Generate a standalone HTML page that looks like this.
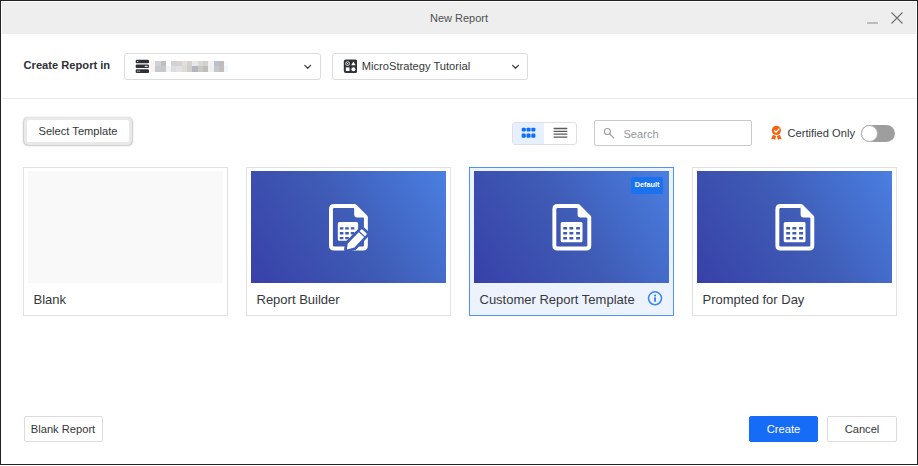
<!DOCTYPE html>
<html>
<head>
<meta charset="utf-8">
<title>New Report</title>
<style>
*{box-sizing:border-box;margin:0;padding:0}
html,body{width:918px;height:466px;overflow:hidden;background:#fff;font-family:"Liberation Sans",Arial,sans-serif;color:#35383a}
.abs{position:absolute}
#frame{position:absolute;left:0;top:0;width:918px;height:465px;border:1px solid #222;background:#fff}
#titlebar{position:absolute;left:2px;top:2px;width:914px;height:32px;background:#eeeeee}
#title{position:absolute;left:0;top:2px;width:918px;height:32px;line-height:33.8px;text-align:center;font-size:11px;color:#505050}
#lbl{left:23.5px;top:58.4px;font-size:11.15px;font-weight:bold;color:#2c3036;line-height:15px;white-space:nowrap}
.dd{position:absolute;top:53px;height:27px;border:1px solid #dcdcdc;border-radius:3px;background:#fff;font-size:11.15px;line-height:25.6px;color:#35383a;white-space:nowrap}
#sep{position:absolute;left:2px;top:98px;width:914px;height:1px;background:#ebebeb}
#seltpl{position:absolute;left:27px;top:120px;width:102px;height:22px;border-radius:2px;box-shadow:0 0 0 3px #e9e9e9,0 0.5px 1.5px 3.3px rgba(0,0,0,.22);font-size:11.15px;line-height:22px;text-align:center;color:#35383a;background:#fff;white-space:nowrap}
#toggle{position:absolute;left:512px;top:122px;width:65px;height:23px;border:1px solid #e0e0e0;border-radius:3px;background:#fff;overflow:hidden}
#toggle .on{position:absolute;left:0;top:0;width:31px;height:21px;background:#e7f0fe}
#search{position:absolute;left:594px;top:120px;width:158px;height:26px;border:1px solid #cacaca;border-radius:2px;background:#fff;font-size:11.15px;line-height:26.4px;color:#94979b;white-space:nowrap}
#cert{position:absolute;left:787.5px;top:126px;font-size:11.15px;line-height:15px;color:#35383a;white-space:nowrap}
#sw{position:absolute;left:861px;top:125px;width:34px;height:16.5px;border-radius:8.5px;background:#9e9e9e}
#sw i{position:absolute;left:0;top:0;width:16.5px;height:16.5px;border-radius:8.5px;background:#fff;border:1px solid #b0b0b0}
.card{position:absolute;top:167px;width:205px;height:149px;border:1px solid #e1e1e1;background:#fff}
.card .img{position:absolute;left:4px;top:3px;width:195px;height:112px;background:linear-gradient(57deg,#3840a8 0%,#3f5bb5 50%,#4a7fe2 100%)}
.card .nm{position:absolute;left:9.5px;top:122.5px;font-size:13px;line-height:18px;color:#35383a;white-space:nowrap}
.card.sel{border-color:#4f93f6;background:#edf3fe}
.badge{position:absolute;left:157px;top:6px;width:32px;height:16.5px;border-radius:2px;background:#1a72ef;color:#fff;font-size:7.3px;font-weight:bold;line-height:16.5px;text-align:center}
.btn{position:absolute;top:416px;height:26px;border:1px solid #dcdcdc;border-radius:2px;background:#fff;font-size:11.15px;line-height:24.5px;text-align:center;color:#35383a;white-space:nowrap}
</style>
</head>
<body>
<div id="frame"></div>
<div id="titlebar"></div>
<div id="title">New Report</div>
<svg class="abs" style="left:860px;top:8px" width="50" height="20" viewBox="0 0 50 20"><path d="M7 15h11" stroke="#a6a6a6" stroke-width="1.4" fill="none"/><path d="M31.5 4.5l11 11M42.5 4.5l-11 11" stroke="#707070" stroke-width="1.1" fill="none"/></svg>

<div id="lbl" class="abs">Create Report in</div>
<div class="dd" style="left:124px;width:197px"></div>
<svg class="abs" style="left:135px;top:59px" width="14" height="14" viewBox="0 0 14 14"><g transform="translate(0.7 0.7)"><g fill="#2d3135"><rect x="0" y="0" width="13.3" height="3.6" rx="1.1"/><rect x="0" y="4.8" width="13.3" height="3.6" rx="1.1"/><rect x="0" y="9.6" width="13.3" height="3.7" rx="1.1"/></g><g fill="#e0e0e0"><rect x="1.5" y="1.3" width="1.1" height="1"/><rect x="9" y="6.1" width="3.1" height="1.1" rx="0.5"/><rect x="1.5" y="10.9" width="1" height="1.1"/><rect x="3.1" y="10.9" width="1" height="1.1"/></g></g></svg>
<svg class="abs" style="left:150px;top:61px" width="80" height="11" viewBox="0 0 80 11" shape-rendering="crispEdges"><rect x="0" y="0" width="5" height="5.2" fill="#f7f4ef"/><rect x="0" y="5.2" width="5" height="5.6" fill="#f7f4ef"/><rect x="5" y="0" width="6" height="5.2" fill="#cfd3d8"/><rect x="5" y="5.2" width="6" height="5.6" fill="#c6c9d0"/><rect x="11" y="0" width="5" height="5.2" fill="#bfbdc2"/><rect x="11" y="5.2" width="5" height="5.6" fill="#c9c8cb"/><rect x="16" y="0" width="5" height="5.2" fill="#fdfcfa"/><rect x="16" y="5.2" width="5" height="5.6" fill="#eef5f7"/><rect x="21" y="0" width="5" height="5.2" fill="#d3d1d3"/><rect x="21" y="5.2" width="5" height="5.6" fill="#dddcdf"/><rect x="26" y="0" width="6" height="5.2" fill="#d4d3d4"/><rect x="26" y="5.2" width="6" height="5.6" fill="#e3e2e2"/><rect x="32" y="0" width="5" height="5.2" fill="#e3e0db"/><rect x="32" y="5.2" width="5" height="5.6" fill="#dfdcd7"/><rect x="37" y="0" width="5" height="5.2" fill="#d3d2d0"/><rect x="37" y="5.2" width="5" height="5.6" fill="#cfcfcd"/><rect x="42" y="0" width="6" height="5.2" fill="#e6e8ea"/><rect x="42" y="5.2" width="6" height="5.6" fill="#b3b6be"/><rect x="48" y="0" width="5" height="5.2" fill="#d8dad4"/><rect x="48" y="5.2" width="5" height="5.6" fill="#c9c9c1"/><rect x="53" y="0" width="5" height="5.2" fill="#d4d0cd"/><rect x="53" y="5.2" width="5" height="5.6" fill="#c2bcb9"/><rect x="58" y="0" width="6" height="5.2" fill="#f0f1f0"/><rect x="58" y="5.2" width="6" height="5.6" fill="#edf0ef"/><rect x="64" y="0" width="5" height="5.2" fill="#b9c1cc"/><rect x="64" y="5.2" width="5" height="5.6" fill="#c7c7cb"/><rect x="69" y="0" width="5" height="5.2" fill="#bdb9bd"/><rect x="69" y="5.2" width="5" height="5.6" fill="#c3bdbf"/><rect x="74" y="0" width="4" height="5.2" fill="#fbfcfe"/><rect x="74" y="5.2" width="4" height="5.6" fill="#eef5fb"/></svg>
<svg class="abs" style="left:301px;top:62px" width="12" height="10" viewBox="0 0 12 10"><path d="M3.8 3.4l2.9 2.9L9.6 3.4" stroke="#3a3d40" stroke-width="1.25" stroke-linecap="round" stroke-linejoin="round" fill="none"/></svg>
<div class="dd" style="left:332px;width:196px"><span style="position:absolute;left:28.8px;top:0">MicroStrategy Tutorial</span></div>
<svg class="abs" style="left:343px;top:59px" width="14" height="14" viewBox="0 0 14 14"><g transform="translate(0.8 0.4)"><rect x="0" y="0" width="13.5" height="13.6" rx="2" fill="#2f3336"/><circle cx="3.8" cy="4.2" r="1.9" fill="none" stroke="#fff" stroke-width="0.8"/><circle cx="3.8" cy="4.2" r="0.6" fill="#fff"/><path d="M9.6 2.2l2.2 3.7H7.4z" fill="#fff"/><rect x="2" y="8" width="3.7" height="3.6" fill="#fff"/><circle cx="9.6" cy="9.8" r="2" fill="#fff"/></g></svg>
<svg class="abs" style="left:509px;top:62px" width="12" height="10" viewBox="0 0 12 10"><path d="M3.6 3.4l2.9 2.9L9.4 3.4" stroke="#3a3d40" stroke-width="1.25" stroke-linecap="round" stroke-linejoin="round" fill="none"/></svg>
<div id="sep"></div>

<div id="seltpl">Select Template</div>
<div id="toggle"><div class="on"></div></div>
<svg class="abs" style="left:521px;top:127px" width="16" height="12" viewBox="0 0 16 12"><g fill="#0d6efd"><rect x="0.7" y="0.7" width="4.1" height="3.9" rx="1.1"/><rect x="5.5" y="0.7" width="4.1" height="3.9" rx="1.1"/><rect x="10.3" y="0.7" width="4.1" height="3.9" rx="1.1"/><rect x="0.7" y="6.6" width="4.1" height="4.2" rx="1.1"/><rect x="5.5" y="6.6" width="4.1" height="4.2" rx="1.1"/><rect x="10.3" y="6.6" width="4.1" height="4.2" rx="1.1"/></g></svg>
<svg class="abs" style="left:553px;top:127px" width="16" height="12" viewBox="0 0 16 12"><g stroke="#5a5a5a" stroke-width="1.3"><path d="M0.6 1.5h13.7M0.6 4.3h13.7M0.6 7.2h13.7M0.6 10.1h13.7"/></g></svg>
<div id="search"><span style="position:absolute;left:28.4px;top:0">Search</span></div>
<svg class="abs" style="left:603px;top:127px" width="14" height="14" viewBox="0 0 14 14"><circle cx="4.4" cy="4.5" r="3" fill="none" stroke="#9c9c9c" stroke-width="1.1"/><path d="M6.6 6.8l4.3 4.3" stroke="#9c9c9c" stroke-width="1.2" fill="none"/></svg>
<svg class="abs" style="left:770px;top:125px" width="14" height="16" viewBox="0 0 14 16"><g transform="translate(0 0.4)"><path fill="#f4640f" d="M2.9 9.3L6.1 10.5L5.1 14.7L3.8 13.7L1.1 13.9zM9.9 9.3L6.9 10.5L8.0 14.7L9.2 13.7L11.7 13.9z"/><circle cx="6.4" cy="5.05" r="5.1" fill="#fff"/><circle cx="6.4" cy="5.05" r="4.6" fill="#f4640f"/><path d="M4.2 5.0l1.8 1.8l3.3-3.4" stroke="#fff" stroke-width="1.3" fill="none"/></g></svg>
<div id="cert">Certified Only</div>
<div id="sw"><i></i></div>

<div class="card" style="left:23px"><div class="img" style="background:#f9f9f9"></div><div class="nm">Blank</div></div>
<div class="card" style="left:246px"><div class="img"><svg class="abs" style="left:78px;top:33px" width="42" height="50" viewBox="0 0 42 50"><mask id="pm" maskUnits="userSpaceOnUse" x="0" y="0" width="42" height="50"><rect x="0" y="0" width="42" height="50" fill="#fff"/><path d="M17.8 45.4L18.8 39.5L29.8 28.2L35.2 33L25.5 43.4ZM30.65 27.35L32 25.7Q32.6 25 33.4 25.6L37.4 29.2Q38.1 29.9 37.5 30.6L36.05 32.15Z" fill="#000" stroke="#000" stroke-width="5.4" stroke-linejoin="round"/></mask><g mask="url(#pm)"><path d="M5.2 1.95H25.7L36.9 13.2V41.5Q36.9 44.5 33.9 44.5H5.2Q1.95 44.5 1.95 41.5V5.2Q1.95 1.95 5.2 1.95Z" fill="none" stroke="#fff" stroke-width="3.9" stroke-linejoin="round"/><path d="M25.2 1.5V10.2Q25.2 13.4 28.4 13.4H37.2Z" fill="#fff"/><path fill-rule="evenodd" fill="#fff" d="M10.30 18.0h17.30q1.5 0 1.5 1.5v15.70q0 1.5 -1.5 1.5h-17.30q-1.5 0 -1.5 -1.5v-15.70q0 -1.5 1.5 -1.5zM10.80 23.20h3.6v2.4h-3.6zM10.80 28.00h3.6v2.4h-3.6zM10.80 32.90h3.6v2.4h-3.6zM16.20 23.20h3.6v2.4h-3.6zM16.20 28.00h3.6v2.4h-3.6zM16.20 32.90h3.6v2.4h-3.6zM21.80 23.20h3.6v2.4h-3.6zM21.80 28.00h3.6v2.4h-3.6zM21.80 32.90h3.6v2.4h-3.6z"/></g><path d="M17.8 45.4L18.8 39.5L29.8 28.2L35.2 33L25.5 43.4ZM30.65 27.35L32 25.7Q32.6 25 33.4 25.6L37.4 29.2Q38.1 29.9 37.5 30.6L36.05 32.15Z" fill="#fff"/></svg></div><div class="nm">Report Builder</div></div>
<div class="card sel" style="left:469px"><div class="img"><svg class="abs" style="left:78px;top:33px" width="40" height="48" viewBox="0 0 40 48"><g transform="translate(0.4 0)"><path d="M5.2 1.95H25.7L36.9 13.2V41.5Q36.9 44.5 33.9 44.5H5.2Q1.95 44.5 1.95 41.5V5.2Q1.95 1.95 5.2 1.95Z" fill="none" stroke="#fff" stroke-width="3.9" stroke-linejoin="round"/><path d="M25.2 1.5V10.2Q25.2 13.4 28.4 13.4H37.2Z" fill="#fff"/><path fill-rule="evenodd" fill="#fff" d="M9.80 18.0h18.80q1.5 0 1.5 1.5v17.30q0 1.5 -1.5 1.5h-18.80q-1.5 0 -1.5 -1.5v-17.30q0 -1.5 1.5 -1.5zM10.80 23.10h3.9v2.5h-3.9zM10.80 28.10h3.9v2.5h-3.9zM10.80 33.00h3.9v2.5h-3.9zM17.00 23.10h3.9v2.5h-3.9zM17.00 28.10h3.9v2.5h-3.9zM17.00 33.00h3.9v2.5h-3.9zM23.70 23.10h3.9v2.5h-3.9zM23.70 28.10h3.9v2.5h-3.9zM23.70 33.00h3.9v2.5h-3.9z"/></g></svg><div class="badge">Default</div></div><div class="nm">Customer Report Template</div>
<svg class="abs" style="left:177px;top:122px" width="16" height="16" viewBox="0 0 16 16"><circle cx="8" cy="8.3" r="6.5" fill="none" stroke="#3a84f5" stroke-width="1.5"/><circle cx="8" cy="5.6" r="1.05" fill="#2f7df4"/><rect x="7.1" y="7.3" width="1.8" height="4.4" fill="#2f7df4"/></svg></div>
<div class="card" style="left:692px"><div class="img"><svg class="abs" style="left:78px;top:33px" width="40" height="48" viewBox="0 0 40 48"><g transform="translate(0.4 0)"><path d="M5.2 1.95H25.7L36.9 13.2V41.5Q36.9 44.5 33.9 44.5H5.2Q1.95 44.5 1.95 41.5V5.2Q1.95 1.95 5.2 1.95Z" fill="none" stroke="#fff" stroke-width="3.9" stroke-linejoin="round"/><path d="M25.2 1.5V10.2Q25.2 13.4 28.4 13.4H37.2Z" fill="#fff"/><path fill-rule="evenodd" fill="#fff" d="M9.80 18.0h18.80q1.5 0 1.5 1.5v17.30q0 1.5 -1.5 1.5h-18.80q-1.5 0 -1.5 -1.5v-17.30q0 -1.5 1.5 -1.5zM10.80 23.10h3.9v2.5h-3.9zM10.80 28.10h3.9v2.5h-3.9zM10.80 33.00h3.9v2.5h-3.9zM17.00 23.10h3.9v2.5h-3.9zM17.00 28.10h3.9v2.5h-3.9zM17.00 33.00h3.9v2.5h-3.9zM23.70 23.10h3.9v2.5h-3.9zM23.70 28.10h3.9v2.5h-3.9zM23.70 33.00h3.9v2.5h-3.9z"/></g></svg></div><div class="nm">Prompted for Day</div></div>

<div class="btn" style="left:23.5px;width:79px">Blank Report</div>
<div class="btn" style="left:749px;width:69px;background:#176cf7;border-color:#176cf7;color:#fff">Create</div>
<div class="btn" style="left:827px;width:70px">Cancel</div>
</body>
</html>
